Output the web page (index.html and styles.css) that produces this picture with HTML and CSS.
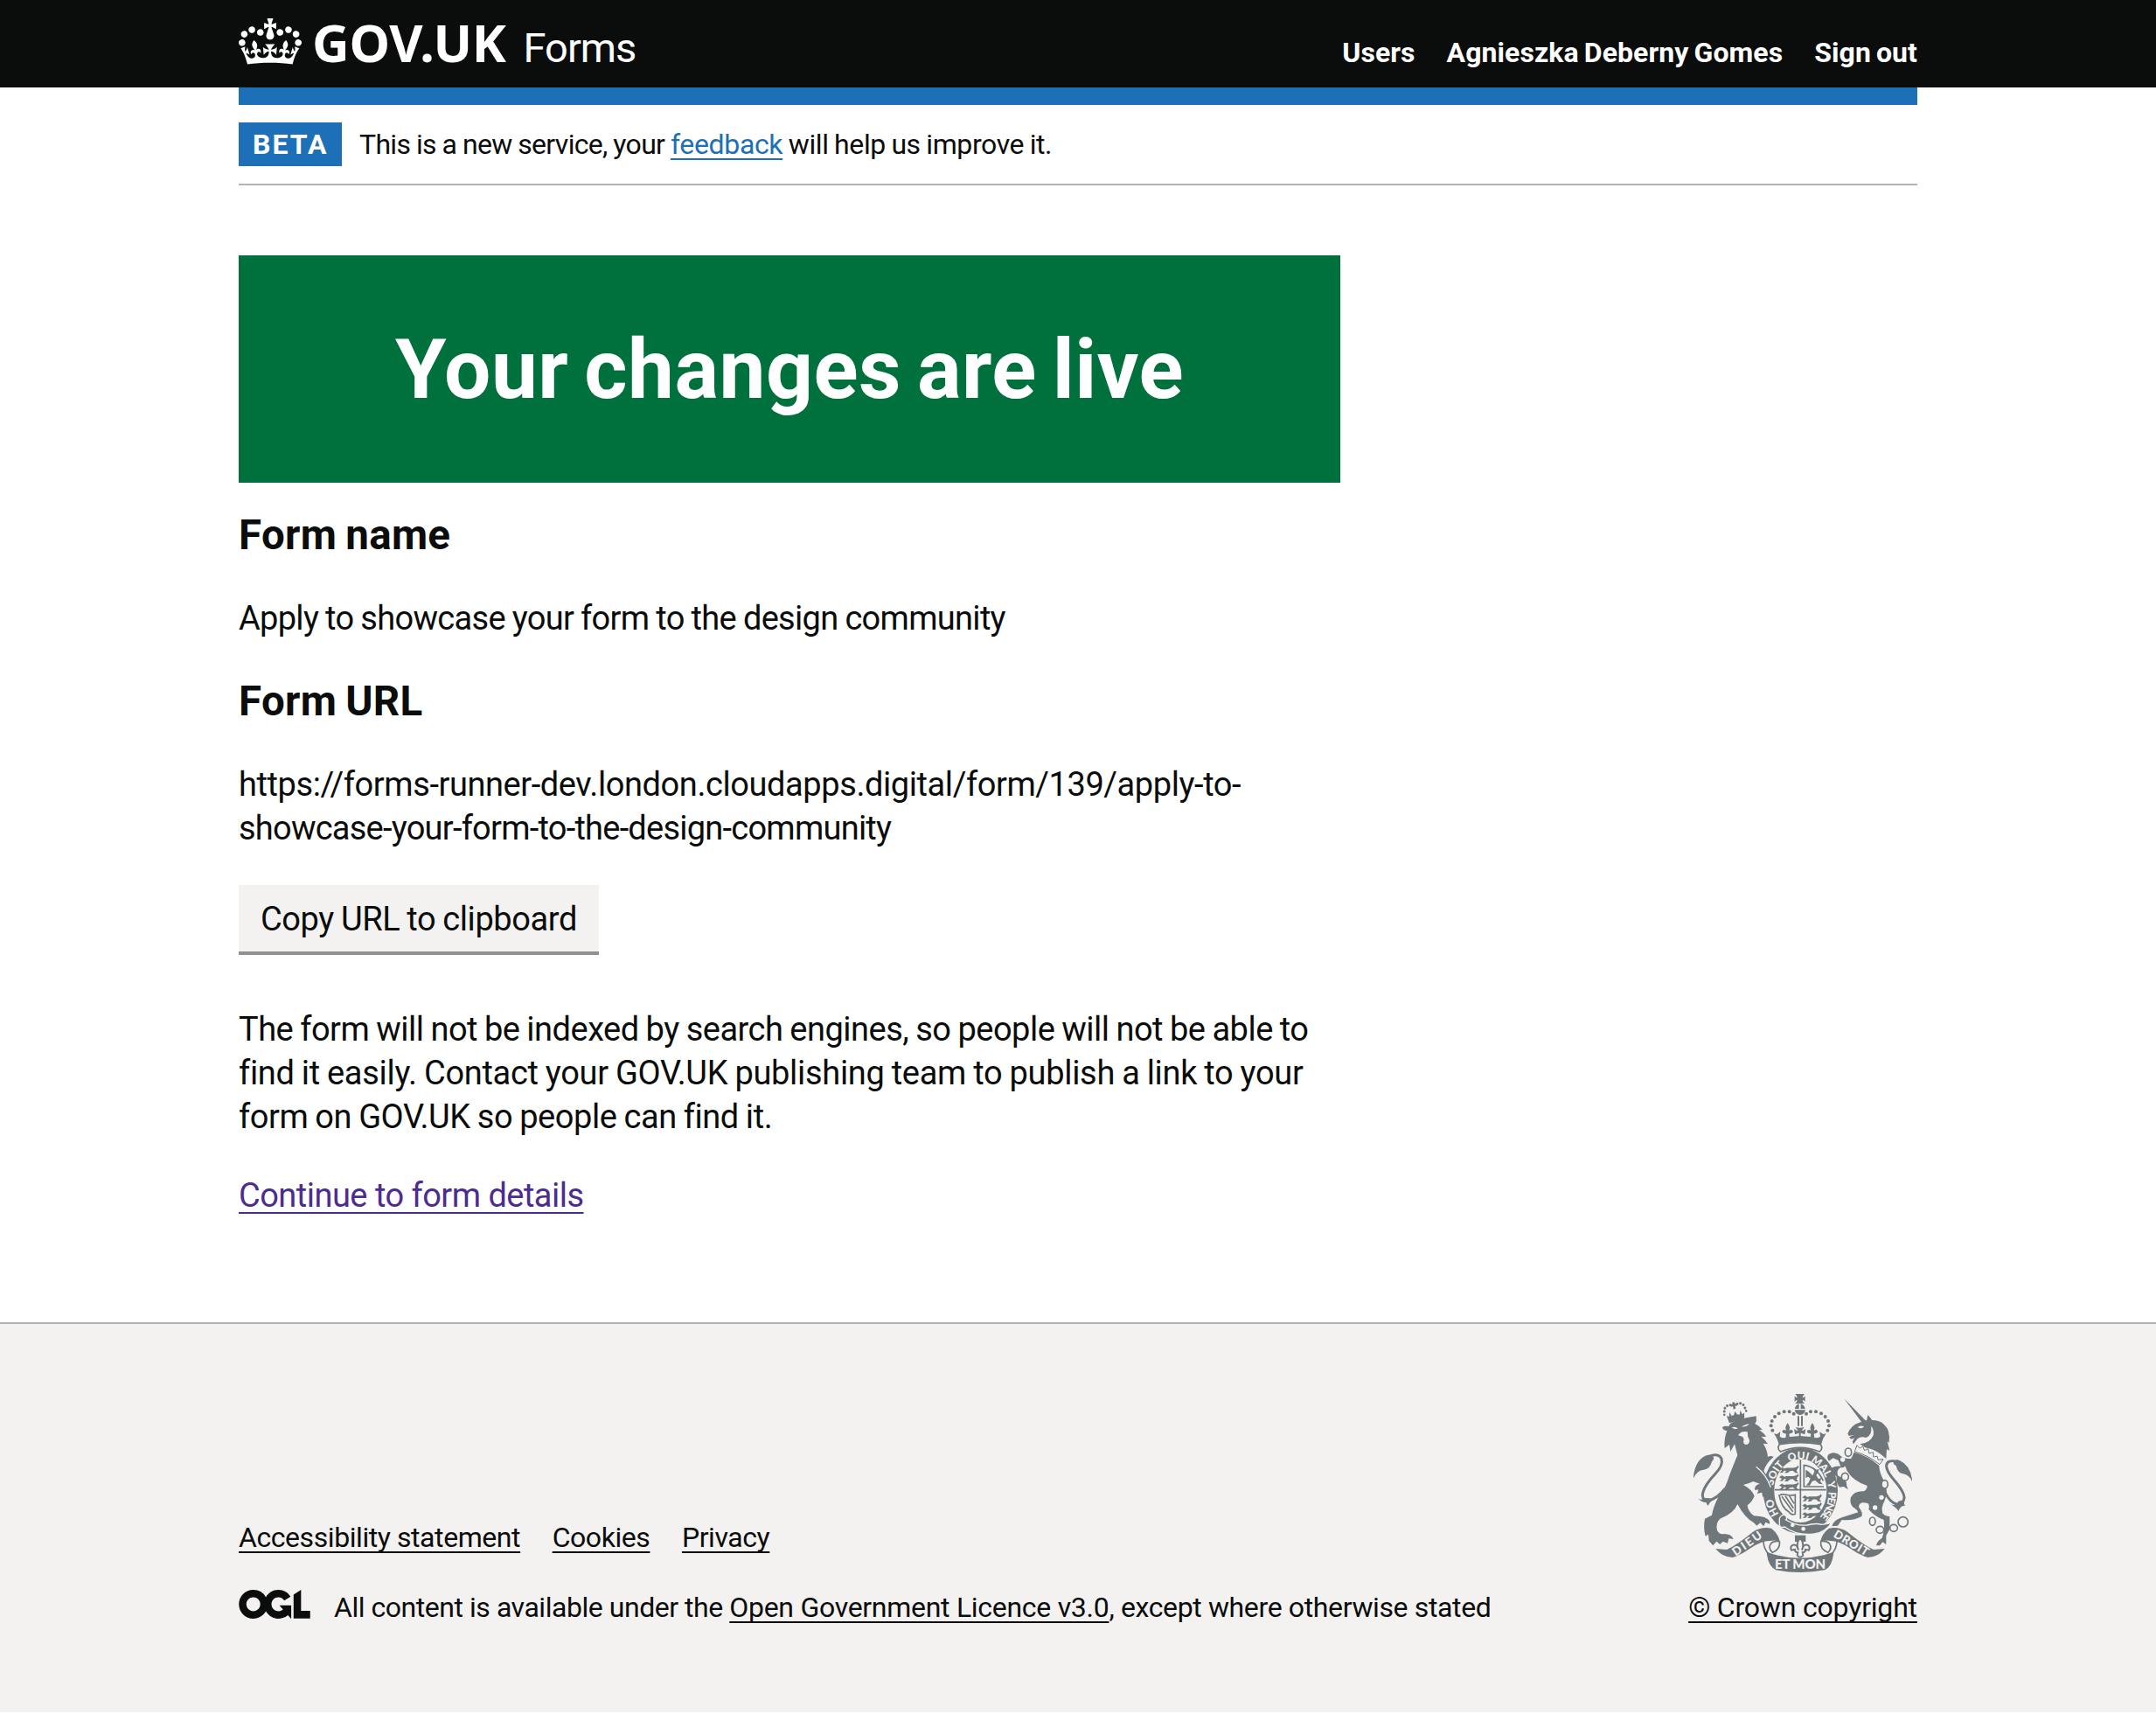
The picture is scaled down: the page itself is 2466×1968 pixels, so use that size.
FILE: index.html
```
<!DOCTYPE html>
<html lang="en">
<head>
<meta charset="utf-8">
<title>Your changes are live – GOV.UK Forms</title>
<link rel="stylesheet" href="styles.css">
</head>
<body>
<header class="header">
  <div class="container header-row">
    <svg class="crown" viewBox="0 0 132 97" width="72" height="53" fill="currentColor" aria-hidden="true"><path d="M25 30.2c3.5 1.5 7.7-.2 9.1-3.7 1.5-3.6-.2-7.8-3.9-9.2-3.6-1.4-7.6.3-9.1 3.9-1.4 3.5.3 7.5 3.9 9zM9 39.5c3.6 1.5 7.8-.2 9.2-3.7 1.5-3.6-.2-7.8-3.9-9.1-3.6-1.5-7.6.2-9.1 3.8-1.4 3.5.3 7.5 3.8 9zM4.4 57.2c3.5 1.5 7.7-.2 9.1-3.8 1.5-3.6-.2-7.7-3.9-9.1-3.5-1.5-7.6.3-9.1 3.8-1.4 3.5.3 7.6 3.9 9.1zm38.3-21.4c3.5 1.5 7.7-.2 9.1-3.8 1.5-3.6-.2-7.7-3.9-9.1-3.6-1.5-7.6.3-9.1 3.8-1.3 3.6.4 7.7 3.9 9.1zm64.4-5.6c-3.6 1.5-7.8-.2-9.1-3.7-1.5-3.6.2-7.8 3.8-9.2 3.6-1.4 7.7.3 9.2 3.9 1.3 3.5-.4 7.5-3.9 9zm15.9 9.3c-3.6 1.5-7.7-.2-9.1-3.7-1.5-3.6.2-7.8 3.7-9.1 3.6-1.5 7.7.2 9.2 3.8 1.5 3.5-.3 7.5-3.8 9zm4.7 17.7c-3.6 1.5-7.8-.2-9.2-3.8-1.5-3.6.2-7.7 3.9-9.1 3.6-1.5 7.7.3 9.2 3.8 1.3 3.5-.4 7.6-3.9 9.1zM89.3 35.8c-3.6 1.5-7.8-.2-9.2-3.8-1.4-3.6.2-7.7 3.9-9.1 3.6-1.5 7.7.3 9.2 3.8 1.4 3.6-.3 7.7-3.9 9.1zM69.7 17.7l8.9 4.7V9.3l-8.9 2.8c-.2-.3-.5-.6-.9-.9L72.4 0H59.6l3.5 11.2c-.3.3-.6.5-.9.9l-8.8-2.8v13.1l8.8-4.7c.3.3.6.7.9.9l-5 15.4v.1c-.2.8-.4 1.6-.4 2.4 0 4.1 3.1 7.5 7 8.1h.2c.3 0 .7.1 1 .1.4 0 .7 0 1-.1h.2c4-.6 7.1-4.1 7.1-8.1 0-.8-.1-1.7-.4-2.4V34l-5.1-15.4c.4-.2.7-.6 1-.9zM66 92.8c16.9 0 32.8 1.1 47.1 3.2 4-16.9 8.9-26.7 14-33.5l-9.6-3.4c1 4.9 1.1 7.2 0 10.2-1.5-1.4-3-4.3-4.2-8.7L108.6 76c2.8-2 5-3.2 7.5-3.3-4.4 9.4-10 11.9-13.6 11.2-4.3-.8-6.3-4.6-5.6-7.9 1-4.7 5.7-5.9 8-.5 4.3-8.7-3-11.4-7.6-8.8 7.1-7.2 7.9-13.5 2.1-21.1-8 6.1-8.1 12.3-4.5 20.8-4.7-5.4-12.1-2.5-9.5 6.2 3.4-5.2 7.9-2 7.2 3.1-.6 4.3-6.4 7.8-13.5 7.2-10.3-.9-10.9-8-11.2-13.8 2.5-.5 7.1 1.8 11 7.3L80.2 60c-4.1 4.4-8 5.3-12.3 5.4 1.4-4.4 8-11.6 8-11.6H55.5s6.4 7.2 7.9 11.6c-4.2-.1-8-1-12.3-5.4l1.4 16.4c3.9-5.5 8.5-7.7 10.9-7.3-.3 5.8-.9 12.8-11.1 13.8-7.2.6-12.9-2.9-13.5-7.2-.7-5 3.8-8.3 7.1-3.1 2.7-8.7-4.6-11.6-9.4-6.2 3.7-8.5 3.6-14.7-4.6-20.8-5.8 7.6-5 13.9 2.2 21.1-4.7-2.6-11.9.1-7.7 8.8 2.3-5.5 7.1-4.2 8.1.5.7 3.3-1.3 7.1-5.7 7.9-3.5.7-9-1.8-13.5-11.2 2.5.1 4.7 1.3 7.5 3.3l-4.7-15.4c-1.2 4.4-2.7 7.2-4.3 8.7-1.1-3-.9-5.3 0-10.2l-9.5 3.4c5 6.9 9.9 16.7 14 33.5 14.8-2.1 30.8-3.2 47.7-3.2z"/></svg>
    <span class="wordmark">GOV.UK</span>
    <span class="product">Forms</span>
    <nav class="header-nav">
      <a href="#">Users</a>
      <a href="#">Agnieszka Deberny Gomes</a>
      <a href="#">Sign out</a>
    </nav>
  </div>
</header>

<div class="container">
  <div class="header-bar"></div>
  <div class="phase-banner">
    <strong class="tag">BETA</strong>
    <span class="phase-text">This is a new service, your <a href="#">feedback</a><span class="phase-end"> will help us improve it.</span></span>
  </div>
  <main class="main">
    <div class="panel"><h1>Your changes are live</h1></div>
    <h2>Form name</h2>
    <p class="form-name">Apply to showcase your form to the design community</p>
    <h2>Form URL</h2>
    <p class="form-url"><span class="line url-a">https://forms-runner-dev.london.cloudapps.digital/form/139/apply-to-</span><span class="line url-b">showcase-your-form-to-the-design-community</span></p>
    <button class="button" type="button">Copy URL to clipboard</button>
    <p class="note"><span class="line note-a">The form will not be indexed by search engines, so people will not be able to </span><span class="line note-b">find it easily. Contact your GOV.UK publishing team to publish a link to your </span><span class="line note-c">form on GOV.UK so people can find it.</span></p>
    <p class="continue"><a href="#">Continue to form details</a></p>
  </main>
</div>

<footer class="footer">
  <div class="container footer-row">
    <div class="footer-meta">
      <ul class="footer-links">
        <li><a href="#">Accessibility statement</a></li>
        <li><a href="#">Cookies</a></li>
        <li><a href="#">Privacy</a></li>
      </ul>
      <div class="licence">
        <svg class="ogl" viewBox="0 0 483.2 195.7" width="82" height="33" fill="currentColor" aria-hidden="true"><path d="M421.5 142.8V.1l-50.7 32.3v161.1h112.4v-50.7zm-122.3-9.6A47.12 47.12 0 0 1 221 97.8c0-26 21.1-47.1 47.1-47.1 16.7 0 31.4 8.7 39.7 21.8l42.7-27.2A97.63 97.63 0 0 0 268.1 0c-36.5 0-68.3 20.1-85.1 49.7A98 98 0 0 0 97.8 0C43.9 0 0 43.9 0 97.8s43.9 97.8 97.8 97.8c36.5 0 68.3-20.1 85.1-49.7a97.76 97.76 0 0 0 149.6 25.4l19.4 22.2h3v-87.8h-80l24.3 27.5zM97.8 145c-26 0-47.1-21.1-47.1-47.1s21.1-47.1 47.1-47.1 47.1 21.1 47.1 47.1S123.8 145 97.8 145"/></svg>
        <span class="licence-text">All content is available under the <a href="#">Open Government Licence v3.0</a><span class="licence-end">, except where otherwise stated</span></span>
      </div>
    </div>
    <div class="copyright">
      <svg class="crest" viewBox="51 42 750 612" width="250" height="204" aria-hidden="true">
        <defs>
          <path id="motto" d="M350 462A96 115 0 1 1 486 462"/>
          <g id="passant">
            <path d="M0 8l7-6 6 5 5-2h18l9-3 2-5 3 6-4 6-2 6 5 6h-8l-6-7-8 1-5 6h-9l5-6-5-2-4 7H1l6-7z"/>
          </g>
          <g id="lions">
            <use href="#passant"/><use href="#passant" y="26"/><use href="#passant" y="52"/>
          </g>
        </defs>
        <!-- imperial crown -->
        <g class="ink">
          <path d="M400 42h32q-7 6-7 13 6 0 9-6v20q-3-6-9-6 0 7 7 12h-32q7-5 7-12-6 0-9 6V49q3 6 9 6 0-7-7-13z"/>
          <path d="M399 93q2-14 14-17v17zM419 76q12 3 15 17h-15zM398 97h37q-4 17-18 17t-19-17z"/>
          <path d="M408 118h6v34h-6zM420 118h6v34h-6z"/>
          <path d="M401 155q15 6 30 0l-9 13q8 0 14-7l-3 20-14-5v12h-6v-12l-14 5-3-20q6 7 14 7z"/>
          <g id="crown-side">
            <circle cx="395" cy="110" r="6"/><circle cx="380" cy="103" r="6"/><circle cx="362" cy="103" r="6"/><circle cx="344" cy="109" r="6"/><circle cx="330" cy="120" r="6"/><circle cx="320" cy="135" r="6"/><circle cx="317" cy="151" r="6"/><circle cx="322" cy="167" r="6"/>
            <path d="M374 142q11 13 5 26 8-7 13 1 1 8-7 8l-6 2 2 12h-14l2-12-6-2q-8 0-7-8 5-8 13-1-6-13 5-26z"/>
            <path d="M327 178l10 2 12-8-2 16q10 8 26 2l44-4v24q-38-4-73 6-5-22-17-38z"/>
          </g>
          <use href="#crown-side" transform="matrix(-1 0 0 1 833 0)"/>
        </g>
        <!-- garter and shield -->
        <ellipse class="garter" cx="418" cy="374" rx="109" ry="128"/>
        <path class="paper pen thin" d="M350 240q-14-10-4-25 70-12 141 0 10 15-4 25-66-28-133 0z"/>
        <path class="pen thin" d="M418 268v202M330 371h176"/>
        <g class="ink">
          <use href="#lions" transform="translate(345 290) scale(1.350 1.100)"/>
          <use href="#lions" transform="translate(424 388) scale(1.350 1.100)"/>
          <path d="M436 302l10 6 14 14 6-14-4-14 10 8 10-2-4 12-6 8 8 14 10-4-4 12 8 10-12-2-14-12-10 4-8 14-12 0 8-10 6-14-8-6-8 4z"/>
        </g>
        <path class="pen thin" d="M430 284v76h68M430 286q44 6 66 54"/>
        <path class="pen thin" d="M345 390q12-6 24-2t31 0v66q-14 6-22-8-24-12-33-56zM354 394l38 52M366 392l28 42M380 392l16 26"/>
        <g class="motto">
          <text><textPath href="#motto" startOffset="2%">HO</textPath></text>
          <text><textPath href="#motto" startOffset="22%">SOIT</textPath></text>
          <text><textPath href="#motto" startOffset="42%">QUI</textPath></text>
          <text><textPath href="#motto" startOffset="57%">MAL</textPath></text>
          <text><textPath href="#motto" startOffset="75.5%">Y</textPath></text>
          <text><textPath href="#motto" startOffset="82%" textLength="94">PENSE</textPath></text>
        </g>
        <path class="ink edge" d="M346 468q10-16 22-8 6 12 0 14 36 22 72 18 30-8 50-2 20 0 36-8-20 34-60 40-60 8-102-24-18 4-18-8z"/>
        <circle class="paper" cx="391" cy="492" r="7"/><circle class="paper" cx="428" cy="505" r="7"/>
        <!-- lion -->
        <g class="ink">
          <g transform="rotate(-10 193 106)">
            <circle cx="158" cy="96" r="4.500"/><circle cx="162" cy="85" r="4.500"/><circle cx="171" cy="78" r="4.500"/><circle cx="182" cy="78" r="4.500"/><circle cx="206" cy="78" r="4.500"/><circle cx="217" cy="78" r="4.500"/><circle cx="226" cy="85" r="4.500"/><circle cx="230" cy="96" r="4.500"/><circle cx="156" cy="107" r="4"/><circle cx="232" cy="107" r="4"/>
            <path d="M190 70h8v6h7v8h-7v10h-8V84h-7v-8h7zM163 112l8 4 4-14 5 13 8-1 6-12 6 12 8 1 5-13 4 14 8-4-5 26q-26-6-52 0z"/>
          </g>
          <path d="M150 156Q158 150 172 153Q178 138 196 134Q232 122 266 118L267 134L262 144Q278 152 288 166L276 165Q292 176 301 188L284 189Q298 200 306 214L290 212Q304 232 306 258Q316 252 326 258Q300 280 292 306Q312 336 322 372L328 396L316 388L308 398L298 388L288 396L286 380L270 384L274 370L262 372Q258 356 278 350L256 342Q240 350 222 354Q252 370 260 392Q252 412 236 424Q238 446 258 460Q290 462 300 468Q316 476 312 488L298 482L292 496L280 484L268 494L258 484Q226 466 202 420Q190 452 142 470Q126 484 132 510Q140 526 156 522Q182 522 188 540L172 538L168 554L152 548L142 558L130 548L118 562L104 546L102 524L92 530Q84 500 90 470L114 458Q118 430 138 392Q160 370 174 322Q190 280 202 252Q196 230 192 214L178 240L174 216L158 228Q154 200 166 168Q152 168 150 156Z"/>
          <path d="M50 334Q54 272 92 254Q106 248 118 256Q124 266 114 274Q108 300 86 302Q62 304 50 334Z"/>
          <path d="M66 400Q74 408 90 400Q104 396 118 404L108 414L100 426L94 414Q78 414 66 400Z"/>
        </g>
        <path class="pen tail" d="M104 256Q136 244 147 264Q154 286 126 316Q92 352 84 378Q76 404 100 408Q130 404 160 366"/>
        <path class="paper" d="M182 157Q192 152 204 160Q192 166 182 157ZM216 154Q230 146 242 144Q236 156 216 154ZM204 184Q214 168 236 172L238 190Q248 206 238 214Q226 220 222 206Q226 196 220 190Q212 186 204 184Z"/>
        <path class="cut" d="M266 292Q300 318 316 362"/>
        <!-- unicorn -->
        <g class="ink">
          <path d="M567 57L644 136L630 142Z"/>
          <path d="M580 178Q592 148 620 140L646 132Q646 122 650 114L664 132Q690 132 704 146Q728 166 722 210L716 204L724 236L714 232L712 264L690 246Q664 230 640 226L622 214Q658 210 668 184Q672 164 660 152Q666 180 644 192Q624 186 614 196Q606 206 600 214L596 206L604 192Q590 202 586 190L602 182L584 186Z"/>
          <path d="M602 242Q650 254 688 288Q688 310 704 340Q722 374 706 410Q694 430 700 452Q712 464 724 462V506L712 528V558L700 550L690 562L678 562Q680 548 698 536Q708 510 704 474Q672 462 652 438Q656 426 650 418Q620 408 618 430Q634 452 628 462Q600 478 560 474L546 494L526 496Q532 474 560 466L616 448Q614 440 604 434Q586 424 590 398Q602 374 636 376Q650 366 646 356Q600 342 578 306L572 290Q560 298 556 294Q540 304 546 322Q572 336 576 346Q574 358 582 370L566 360L552 362Q540 348 542 326Q526 310 524 296Q540 288 556 290L548 270L530 262L516 272Q506 262 514 250Q530 238 548 248Q566 266 592 264Z"/>
          <path d="M802 344Q798 288 758 270Q744 264 738 274Q734 284 746 288Q752 314 770 316Q792 320 802 344Z"/>
          <path d="M726 420Q744 430 754 410L776 404Q770 418 778 426Q764 422 754 444Q746 430 726 420Z"/>
        </g>
        <path class="pen tail" d="M752 275Q712 264 713 292Q716 312 740 338Q776 380 774 400Q770 424 748 420Q724 414 708 378"/>
        <path class="paper pen band" d="M604 240L612 218L622 228L632 222L638 236L650 230L654 246L668 242L668 258L682 256L684 268L702 266L690 284Q650 252 604 240Z"/>
        <path class="paper" d="M614 156Q624 148 636 154Q628 164 614 156Z"/>
        <g class="pen chain">
          <ellipse cx="582" cy="242" rx="11" ry="14"/><ellipse class="paper" cx="571" cy="326" rx="12" ry="13"/><ellipse class="paper" cx="707" cy="352" rx="11" ry="14"/><ellipse cx="665" cy="479" rx="10" ry="14"/><ellipse cx="691" cy="508" rx="13" ry="12"/><ellipse class="paper" cx="738" cy="502" rx="13" ry="12"/><circle cx="770" cy="481" r="17"/>
        </g>
        <circle class="paper" cx="563" cy="267" r="8"/><circle class="paper" cx="696" cy="397" r="8"/><circle class="paper" cx="674" cy="432" r="8"/>
        <!-- motto scroll -->
        <g id="scroll-side">
          <path class="ink" d="M127 573L165 576Q200 560 255 515Q285 496 318 503Q342 520 348 550Q330 542 314 546Q285 545 245 572Q215 594 185 603Q150 602 127 573Z"/>
          <path class="pen thin" d="M291 548Q292 574 310 592M346 548Q350 574 322 586Q306 572 316 556Q326 544 346 548"/>
        </g>
        <use href="#scroll-side" transform="matrix(-1 0 0 1 834 0)"/>
        <path class="ink" d="M302 584Q417 626 532 584Q528 634 502 646Q417 662 334 646Q306 634 302 584Z"/>
        <g class="motto">
          <text class="dieu" transform="translate(196 599) rotate(-35)" textLength="114">DIEU</text>
          <text class="dieu" transform="translate(529 531) rotate(31)" textLength="132">DROIT</text>
          <text class="mon" x="330" y="643" textLength="174">ET MON</text>
        </g>
        <path class="ink" d="M399 527h37v22h-37z"/>
        <path class="pen thin fleur" d="M417 536q-16 18-6 42-4-20-18-18-12 4-6 18l12-2q0 10 10 10l-2 10q10 12 20 0l-2-10q10 0 10-10l12 2q6-14-6-18-14-2-18 18 10-24-6-42z"/>
      </svg>
      <a href="#">© Crown copyright</a>
    </div>
  </div>
</footer>
</body>
</html>
```
FILE: styles.css
```
* { box-sizing: border-box; }

body {
  margin: 0;
  background: #fff;
  color: #0b0c0c;
  font-family: Roboto, "Noto Sans", sans-serif;
  font-size: 38px;
  line-height: 50px;
}

h1, h2, p, ul { margin: 0; padding: 0; }

a {
  color: inherit;
  text-decoration-line: underline;
  text-decoration-thickness: 2px;
  text-underline-offset: 5px;
  text-decoration-skip-ink: none;
}

.container { width: 1920px; margin: 0 auto; }

/* Header */
.header { height: 100px; background: #0b0c0c; color: #fff; }
.header-row { display: flex; align-items: baseline; padding-top: 18px; }
.crown { align-self: flex-start; margin-top: 3px; flex: none; }
.wordmark {
  margin-left: 12px;
  font: 700 59px/60px "Noto Sans", sans-serif;
  letter-spacing: -0.3px;
}
.product { margin-left: 20px; font-size: 47px; letter-spacing: -1px; }
.header-nav {
  display: flex;
  gap: 36px;
  margin-left: auto;
  font-size: 32px;
  font-weight: 700;
  letter-spacing: 0.08px;
  word-spacing: -2px;
}
.header-nav a { text-decoration: none; }
.header-bar { height: 20px; background: #1d70b8; }

/* Phase banner */
.phase-banner {
  display: flex;
  gap: 20px;
  padding: 20px 0;
  border-bottom: 2px solid #b1b4b6;
  font-size: 32px;
}
.tag {
  width: 118px;
  padding-left: 16px;
  background: #1d70b8;
  color: #fff;
  letter-spacing: 2px;
}
.phase-text { letter-spacing: -0.68px; word-spacing: -0.6px; white-space: nowrap; }
.phase-text a { color: #1d70b8; letter-spacing: -0.35px; }
.phase-end { letter-spacing: -0.4px; word-spacing: -1px; }

/* Content */
.main { width: 1260px; padding: 80px 0 120px; }
.panel { height: 260px; padding-top: 81px; background: #00703c; color: #fff; text-align: center; }
h1 { font-size: 94.5px; line-height: 100px; letter-spacing: 0.48px; word-spacing: -6px; }
h2 { margin: 45px 0; font-size: 47.5px; line-height: 50px; letter-spacing: 0.3px; word-spacing: -2px; }
.panel + h2 { margin-top: 35px; }
.line { display: block; white-space: nowrap; }
.url-a { letter-spacing: -0.42px; }
.url-b { letter-spacing: -0.76px; }
.note-a { letter-spacing: -0.5px; word-spacing: -1px; }
.note-b { letter-spacing: -0.3px; word-spacing: -1px; }
.note-c { letter-spacing: -0.43px; word-spacing: -1px; }
.form-name { letter-spacing: -0.7px; word-spacing: -0.8px; }
.button {
  display: block;
  width: 412px;
  height: 80px;
  margin: 40px 0 60px;
  padding: 14px 0 12px;
  border: 0;
  border-bottom: 4px solid #929191;
  background: #f3f2f1;
  color: inherit;
  font: inherit;
  letter-spacing: -0.4px;
  word-spacing: -1px;
  text-align: center;
}
.continue { margin-top: 40px; color: #4c2c92; letter-spacing: -0.52px; }
.continue a { text-underline-offset: 6px; }

/* Footer */
.footer { height: 446px; border-top: 2px solid #b1b4b6; background: #f3f2f1; font-size: 32px; }
.footer-row { display: flex; justify-content: space-between; align-items: flex-end; padding-top: 80px; }
.footer-meta { display: flex; flex-direction: column; gap: 30px; letter-spacing: -0.43px; }
.footer-links { display: flex; gap: 36.5px; list-style: none; }
.licence { display: flex; gap: 27px; white-space: nowrap; }
.ogl { margin-top: 5px; flex: none; }
.licence-text { letter-spacing: -0.46px; }
.licence-text a { letter-spacing: -0.29px; }
.licence-end { letter-spacing: -0.37px; }
.copyright {
  display: flex;
  flex-direction: column;
  align-items: center;
  gap: 15px;
  width: 262px;
  white-space: nowrap;
  letter-spacing: -0.19px;
}
.crest { display: block; }

/* Royal arms */
.ink { fill: #6f777b; }
.pen { fill: none; stroke: #6f777b; stroke-width: 6; }
.paper { fill: #f3f2f1; }
.thin { stroke-width: 5; }
.band { stroke-width: 3; }
.chain { stroke-width: 5; }
.tail { stroke-width: 9; }
.fleur { stroke-width: 6; fill: #f3f2f1; }
.cut { fill: none; stroke: #f3f2f1; stroke-width: 4; }
.edge { stroke: #f3f2f1; stroke-width: 4; }
.garter { fill: none; stroke: #6f777b; stroke-width: 38; }
.motto { fill: #f3f2f1; font: 900 36px/1 Lato, sans-serif; letter-spacing: 0; }
.dieu { font-size: 40px; }
.mon { font-size: 45px; }
```
